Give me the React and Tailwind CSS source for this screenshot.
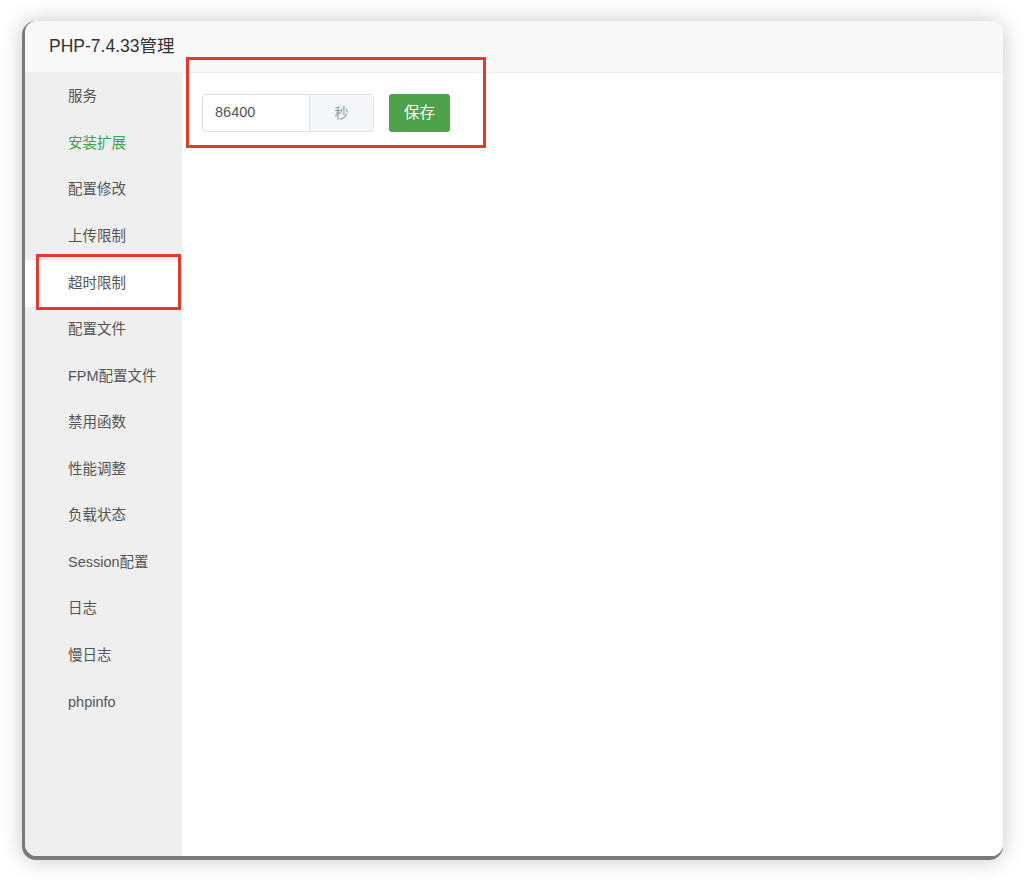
import React from "react";

const menu = [
  "服务",
  "安装扩展",
  "配置修改",
  "上传限制",
  "超时限制",
  "配置文件",
  "FPM配置文件",
  "禁用函数",
  "性能调整",
  "负载状态",
  "Session配置",
  "日志",
  "慢日志",
  "phpinfo",
];

const App = () => {
  return (
    <div
      className="min-h-[883px] bg-white pt-[21px] pl-[22px]"
      style={{ fontFamily: '"Liberation Sans", "Noto Sans CJK SC", sans-serif' }}
    >
      <div className="relative w-[981px] h-[839px] rounded-[14px] bg-[#7a7a7a] pl-[3px] pb-[4px] shadow-[0_0_22px_rgba(0,0,0,0.22)]">
        <div className="w-full h-full rounded-[12px] overflow-hidden flex flex-col bg-white">
          {/* Title bar */}
          <div className="h-[52px] shrink-0 bg-[#f8f8f8] border-b border-[#eeeeee] flex items-center pl-[24px] text-[17.5px] text-[#333]">
            PHP-7.4.33管理
          </div>

          <div className="flex flex-1">
            {/* Sidebar */}
            <div className="w-[157px] bg-[#efefef] pt-[1px]">
              {menu.map((item, i) => (
                <div
                  key={item}
                  className={`h-[46.55px] flex items-center pl-[43px] text-[14.5px] ${
                    i === 4 ? "bg-white text-[#555]" : i === 1 ? "text-[#3fa34b]" : "text-[#555]"
                  }`}
                >
                  {item}
                </div>
              ))}
            </div>

            {/* Content */}
            <div className="flex-1 bg-white pl-[20px] pt-[21px]">
              <div className="flex items-center">
                <div className="flex h-[38px] border border-[#dfe1e6] rounded-[4px] overflow-hidden">
                  <div className="w-[106px] flex items-center pl-[12px] text-[14.5px] text-[#555]">86400</div>
                  <div className="w-[64px] flex items-center justify-center border-l border-[#dfe1e6] bg-[#f4f6fa] text-[14px] text-[#999]">
                    秒
                  </div>
                </div>
                <button className="ml-[15px] w-[61px] h-[38px] rounded-[3px] bg-[#4ea24c] text-white text-[15.5px]">
                  保存
                </button>
              </div>
            </div>
          </div>
        </div>

        {/* Annotation boxes */}
        <div className="absolute left-[164px] top-[36px] w-[300px] h-[91px] border-[3px] border-[#e8382c]"></div>
        <div className="absolute left-[14px] top-[233px] w-[145px] h-[56px] border-[3px] border-[#e8382c]"></div>
      </div>
    </div>
  );
};

export default App;
